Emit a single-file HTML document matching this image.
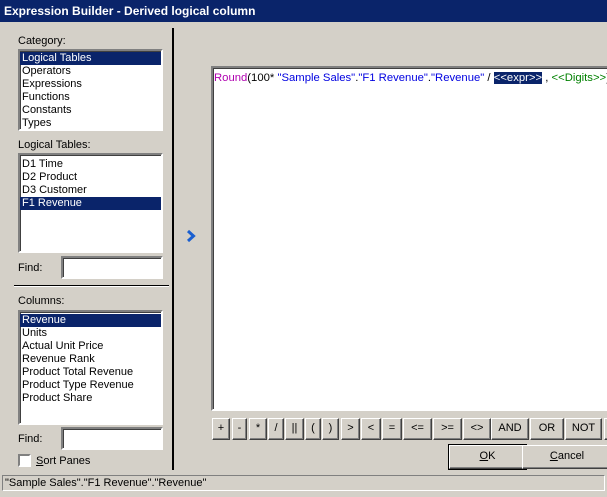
<!DOCTYPE html><html><head><style>
*{margin:0;padding:0;box-sizing:border-box}
body{width:607px;height:497px;background:#d4d0c8;font:11px "Liberation Sans",sans-serif;color:#000;position:relative;overflow:hidden}
.a{position:absolute}
.title{left:0;top:0;width:607px;height:22px;background:#0a246a;color:#fff;font-weight:bold;font-size:12px;padding:4px 0 0 4px;white-space:nowrap}
.sunk{border:2px solid;border-color:#808080 #fff #fff #808080;box-shadow:inset 1px 1px 0 #404040;background:#fff}
.list div{height:13px;line-height:13px;padding-left:2px;white-space:nowrap}
.sel{background:#0a246a;color:#fff}
.btn{position:absolute;top:418px;height:22px;background:#d4d0c8;border:1px solid;border-color:#fff #404040 #404040 #fff;box-shadow:inset -1px -1px 0 #808080;text-align:center;line-height:19px;font-size:11px}
.lbl{position:absolute;left:18px}
</style></head><body>
<div class="a title">Expression Builder - Derived logical column</div>
<div class="lbl" style="top:35px">Category:</div>
<div class="a sunk list" style="left:18px;top:49px;width:145px;height:82px;padding-top:1px"><div class="sel">Logical Tables</div><div>Operators</div><div>Expressions</div><div>Functions</div><div>Constants</div><div>Types</div></div>
<div class="lbl" style="top:139px">Logical Tables:</div>
<div class="a sunk list" style="left:18px;top:153px;width:145px;height:100px;padding-top:3px"><div>D1 Time</div><div>D2 Product</div><div>D3 Customer</div><div class="sel">F1 Revenue</div></div>
<div class="lbl" style="top:262px">Find:</div>
<div class="a sunk" style="left:61px;top:256px;width:102px;height:23px"></div>
<div class="a" style="left:14px;top:285px;width:155px;height:2px;background:#000;border-bottom:1px solid #fff"></div>
<div class="lbl" style="top:295px">Columns:</div>
<div class="a sunk list" style="left:18px;top:310px;width:145px;height:115px;padding-top:2px"><div class="sel">Revenue</div><div>Units</div><div>Actual Unit Price</div><div>Revenue Rank</div><div>Product Total Revenue</div><div>Product Type Revenue</div><div>Product Share</div></div>
<div class="lbl" style="top:433px">Find:</div>
<div class="a sunk" style="left:61px;top:427px;width:102px;height:23px"></div>
<div class="a sunk" style="left:18px;top:454px;width:13px;height:13px;box-shadow:none"></div>
<div class="a" style="left:36px;top:455px"><u>S</u>ort Panes</div>
<div class="a" style="left:172px;top:28px;width:2px;height:442px;background:#000"></div>
<svg class="a" style="left:185px;top:229px" width="12" height="14"><path d="M3 2 L8.5 7 L3 12" stroke="#1a5fd0" stroke-width="3" fill="none"/></svg>
<div class="a sunk" style="left:211px;top:66px;width:400px;height:345px;padding:4px 0 0 1px;white-space:nowrap;font-size:11.3px"><span style="color:#b000b0">Round</span>(100* <span style="color:#0000e0">"Sample Sales"</span>.<span style="color:#0000e0">"F1 Revenue"</span>.<span style="color:#0000e0">"Revenue"</span> / <span style="background:#0a246a;color:#fff">&lt;&lt;expr&gt;&gt;</span> , <span style="color:#008000">&lt;&lt;Digits&gt;&gt;</span>)</div>
<div class="btn" style="left:212px;width:18px">+</div>
<div class="btn" style="left:232px;width:15px">-</div>
<div class="btn" style="left:249px;width:18px">*</div>
<div class="btn" style="left:268px;width:16px">/</div>
<div class="btn" style="left:285px;width:19px">||</div>
<div class="btn" style="left:305px;width:16px">(</div>
<div class="btn" style="left:322px;width:17px">)</div>
<div class="btn" style="left:341px;width:19px">&gt;</div>
<div class="btn" style="left:361px;width:20px">&lt;</div>
<div class="btn" style="left:382px;width:20px">=</div>
<div class="btn" style="left:403px;width:29px">&lt;=</div>
<div class="btn" style="left:433px;width:29px">&gt;=</div>
<div class="btn" style="left:463px;width:28px">&lt;&gt;</div>
<div class="btn" style="left:491px;width:38px">AND</div>
<div class="btn" style="left:530px;width:34px">OR</div>
<div class="btn" style="left:565px;width:37px">NOT</div>
<div class="btn" style="left:604px;width:10px"></div>
<div class="btn" style="left:449px;top:445px;width:77px;height:24px;line-height:21px;outline:1px solid #000"><u>O</u>K</div>
<div class="btn" style="left:522px;top:445px;width:90px;height:24px;line-height:21px"><u>C</u>ancel</div>
<div class="a" style="left:2px;top:475px;width:603px;height:16px;border:1px solid;border-color:#808080 #fff #fff #808080;padding:1px 0 0 2px;white-space:nowrap">"Sample Sales"."F1 Revenue"."Revenue"</div>
</body></html>
